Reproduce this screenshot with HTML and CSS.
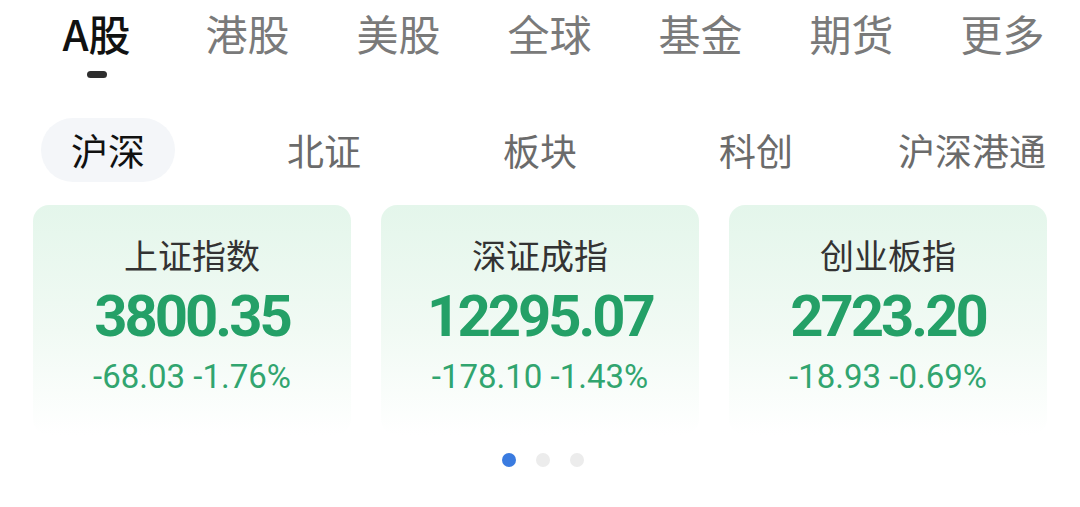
FILE: index.html
```html
<!DOCTYPE html>
<html lang="zh-CN">
<head>
    <meta charset="UTF-8">
    <link rel="stylesheet" href="styles.css">
</head>
<body>
    <div class="tabs">
        <div class="tab active">A股<span class="bar"></span></div>
        <div class="tab">港股</div>
        <div class="tab">美股</div>
        <div class="tab">全球</div>
        <div class="tab">基金</div>
        <div class="tab">期货</div>
        <div class="tab">更多</div>
    </div>
    <div class="subtabs">
        <div class="sub"><span class="pill on">沪深</span></div>
        <div class="sub"><span class="pill">北证</span></div>
        <div class="sub"><span class="pill">板块</span></div>
        <div class="sub"><span class="pill">科创</span></div>
        <div class="sub"><span class="pill">沪深港通</span></div>
    </div>
    <div class="cards">
        <div class="card">
            <div class="name">上证指数</div>
            <div class="price">3800.35</div>
            <div class="chg">-68.03 -1.76%</div>
        </div>
        <div class="card">
            <div class="name">深证成指</div>
            <div class="price">12295.07</div>
            <div class="chg">-178.10 -1.43%</div>
        </div>
        <div class="card">
            <div class="name">创业板指</div>
            <div class="price">2723.20</div>
            <div class="chg">-18.93 -0.69%</div>
        </div>
    </div>
    <div class="dots">
        <span class="dot cur"></span>
        <span class="dot"></span>
        <span class="dot"></span>
    </div>
</body>
</html>
```

FILE: styles.css
```css
body{margin: 0;background: #fff;font-family: "Noto Sans CJK SC", "Noto Sans", sans-serif;}
.tabs{display: grid;grid-template-columns: repeat(7, 151px);padding-left: 21px;margin-top: 8px;}
.tab{font-size: 42px;line-height: 50px;color: #7a7a7a;text-align: center;display: flex;flex-direction: column;align-items: center;}
.tab.active{color: #111;font-weight: 500;}
.bar{display: block;width: 20px;height: 7px;border-radius: 4px;background: #2e2e2e;margin-top: 13px;}
.subtabs{display: grid;grid-template-columns: repeat(5, 216px);margin-top: 40px;}
.sub{text-align: center;}
.pill{display: inline-block;height: 64px;line-height: 64px;padding: 0 30px;border-radius: 32px;font-size: 37px;color: #6b6b6b;}
.pill.on{background: #f4f6f9;color: #111;}
.cards{display: grid;grid-template-columns: repeat(3, 1fr);gap: 30px;padding: 0 33px;margin-top: 23px;}
.card{height: 230px;border-radius: 16px;background: linear-gradient(180deg, #e4f6eb 0%, #f1faf4 55%, #fff 100%);text-align: center;padding-top: 30px;box-sizing: border-box;}
.name{font-size: 34px;line-height: 40px;color: #333;}
.price{font-family: Roboto, sans-serif;font-weight: 700;font-size: 58px;line-height: 60px;letter-spacing: -3px;color: #24a067;margin-top: 11px;}
.chg{font-family: Roboto, sans-serif;font-size: 33px;line-height: 38px;color: #31a56f;margin-top: 12px;}
.dots{display: flex;justify-content: center;gap: 20px;margin-top: 18px;padding-left: 6px;}
.dot{width: 14px;height: 14px;border-radius: 50%;background: #ececec;}
.dot.cur{background: #3a7be0;}
```
